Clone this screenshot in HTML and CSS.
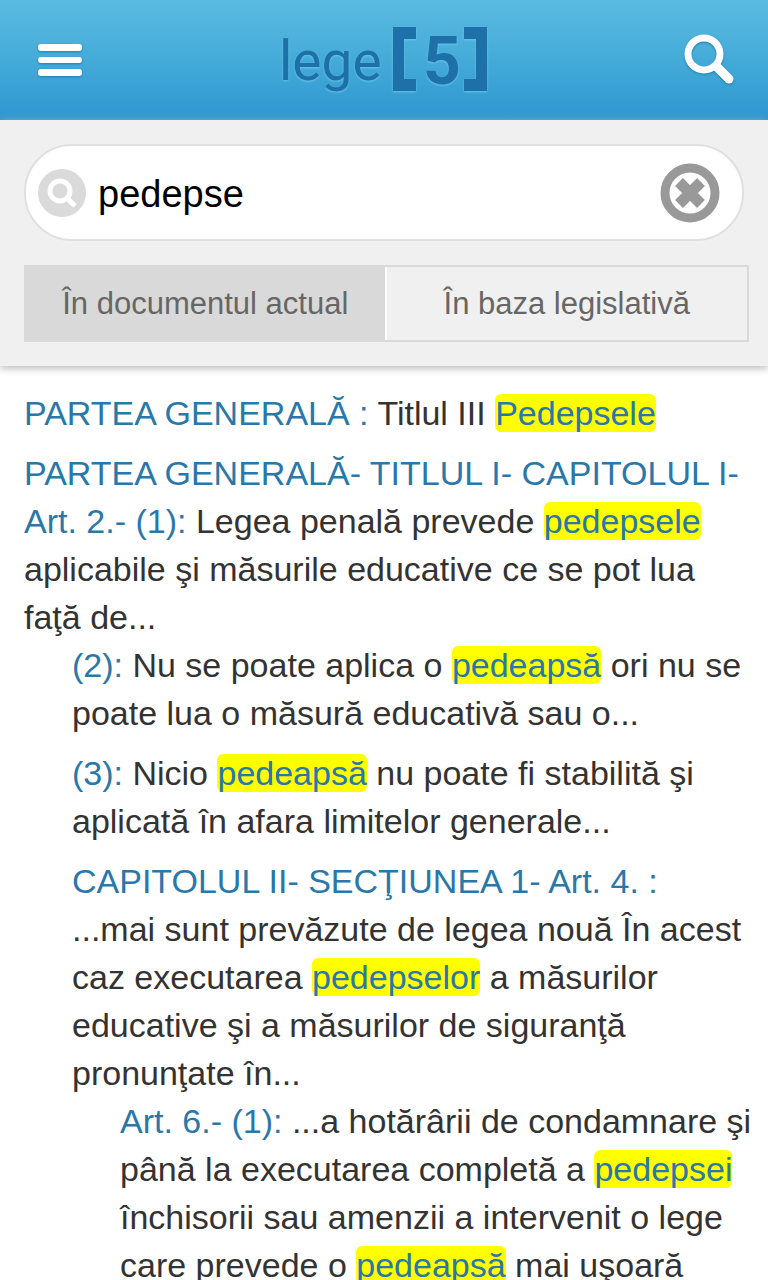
FILE: index.html
```html
<!DOCTYPE html>
<html lang="ro">
<head>
<meta charset="utf-8">
<meta name="viewport" content="width=device-width, initial-scale=1">
<title>lege[5]</title>
<link rel="stylesheet" href="styles.css">
</head>
<body>
<header class="topbar">
  <button class="icon-button" type="button" aria-label="Meniu">
    <svg class="menu-icon" viewBox="0 0 48 36" aria-hidden="true">
      <rect x="2" y="2" width="44" height="7" rx="3"/>
      <rect x="2" y="15" width="44" height="6" rx="3"/>
      <rect x="2" y="27" width="44" height="7" rx="3"/>
    </svg>
  </button>
  <svg class="logo" viewBox="0 0 208 80" role="img" aria-label="lege[5]">
    <text class="logo-word" x="0" y="60">lege</text>
    <path d="M114 7h23v12h-12v40h12v12h-23zM185 7h23v64h-23v-12h12v-40h-12z"/>
    <text class="logo-digit" x="144" y="64">5</text>
  </svg>
  <button class="icon-button" type="button" aria-label="Căutare">
    <svg class="search-icon" viewBox="0 0 54 54" aria-hidden="true">
      <circle cx="22" cy="21" r="16"/>
      <path class="search-handle" d="M35 34l12 12"/>
    </svg>
  </button>
</header>

<form class="search-panel">
  <div class="search-box">
    <svg class="search-badge" viewBox="0 0 48 48" aria-hidden="true">
      <circle class="badge-disc" cx="24" cy="24" r="24"/>
      <circle class="badge-line" cx="22" cy="22" r="10"/>
      <path class="badge-line" d="M29 29l8 8"/>
    </svg>
    <input class="search-input" type="text" value="pedepse" aria-label="Text căutat">
    <button class="clear-button" type="button" aria-label="Șterge">
      <svg class="clear-icon" viewBox="0 0 60 60" aria-hidden="true">
        <circle class="clear-ring" cx="30" cy="30" r="25"/>
        <path class="clear-cross" d="M19 19l22 22M41 19L19 41"/>
      </svg>
    </button>
  </div>
  <div class="scope">
    <button class="scope-button scope-active" type="button">În documentul actual</button>
    <button class="scope-button" type="button">În baza legislativă</button>
  </div>
</form>

<main class="results">
  <ul class="result-list">
    <li><p><a href="#">PARTEA GENERALĂ :</a> Titlul III <mark>Pedepsele</mark></p></li>
    <li>
      <p><a href="#">PARTEA GENERALĂ- TITLUL I- CAPITOLUL I- Art. 2.- (1):</a> Legea penală prevede <mark>pedepsele</mark> aplicabile şi măsurile educative ce se pot lua faţă de...</p>
      <ul class="result-list nested">
        <li><p><a href="#">(2):</a> Nu se poate aplica o <mark>pedeapsă</mark> ori nu se poate lua o măsură educativă sau o...</p></li>
        <li><p><a href="#">(3):</a> Nicio <mark>pedeapsă</mark> nu poate fi stabilită şi aplicată în afara limitelor generale...</p></li>
        <li>
          <p><a class="chapter" href="#">CAPITOLUL II- SECŢIUNEA 1- Art. 4. :</a> ...mai sunt prevăzute de legea nouă În acest caz executarea <mark>pedepselor</mark> a măsurilor educative şi a măsurilor de siguranţă pronunţate în...</p>
          <ul class="result-list nested">
            <li><p><a href="#">Art. 6.- (1):</a> ...a hotărârii de condamnare şi până la executarea completă a <mark>pedepsei</mark> închisorii sau amenzii a intervenit o lege care prevede o <mark>pedeapsă</mark> mai uşoară</p></li>
          </ul>
        </li>
      </ul>
    </li>
  </ul>
</main>
</body>
</html>
```
FILE: styles.css
```css
* {
  box-sizing: border-box;
}

body {
  margin: 0;
  background: #fff;
  color: #333;
  font-family: "Liberation Sans", Arial, sans-serif;
}

button {
  border: 0;
  background: none;
  padding: 0;
  font: inherit;
  color: inherit;
  cursor: pointer;
}

svg {
  display: block;
}

/* Top bar */
.topbar {
  display: flex;
  align-items: center;
  justify-content: space-between;
  height: 120px;
  padding: 0 32px 0 36px;
  background: linear-gradient(#5bbae0, #46add9 45%, #2e96d0);
}

.menu-icon {
  width: 48px;
  height: 36px;
  fill: #fff;
  filter: drop-shadow(0 1px 1px #1f7db0);
}

.search-icon {
  width: 54px;
  height: 54px;
  fill: none;
  stroke: #fff;
  stroke-width: 7;
  stroke-linecap: round;
  filter: drop-shadow(0 1px 1px #1f7db0);
}

.search-handle {
  stroke-width: 9;
}

.logo {
  width: 208px;
  height: 80px;
  fill: #1d70a8;
  overflow: visible;
  filter: drop-shadow(0 1px 1px #6cc4ea);
}

.logo-word {
  font: 400 55px Roboto, sans-serif;
}

.logo-digit {
  font: 700 66px Roboto, sans-serif;
}

/* Search panel */
.search-panel {
  position: relative;
  display: grid;
  gap: 24px;
  padding: 24px 19px 24px 24px;
  background: #f0f0f0;
  box-shadow: 0 2px 8px #b8b4b4;
}

.search-box {
  display: flex;
  align-items: center;
  gap: 12px;
  height: 97px;
  margin-right: 5px;
  padding: 0 22px 0 12px;
  border: 2px solid #e0e0e0;
  border-radius: 48px;
  background: #fff;
}

.search-badge {
  flex: none;
  width: 48px;
  height: 48px;
}

.badge-disc {
  fill: #dadada;
}

.badge-line {
  fill: none;
  stroke: #fff;
  stroke-width: 5;
}

.search-input {
  flex: 1;
  min-width: 0;
  padding: 4px 0 0;
  border: 0;
  outline: 0;
  background: none;
  color: #000;
  font: 38px "Liberation Sans", Arial, sans-serif;
}

.clear-icon {
  width: 60px;
  height: 60px;
  fill: none;
  stroke: #999;
}

.clear-ring {
  stroke-width: 9;
}

.clear-cross {
  stroke-width: 11;
}

.scope {
  display: grid;
  grid-template-columns: 1fr 1fr;
  border: 2px solid #d9d9d9;
}

.scope-button {
  height: 73px;
  color: #666;
  font-size: 31px;
}

.scope-active {
  background: #d9d9d9;
  border-right: 2px solid #fff;
}

/* Results */
.results {
  padding: 23px 16px 23px 24px;
  font-size: 34px;
  line-height: 48px;
}

.results p {
  margin: 0;
}

.result-list {
  margin: 0;
  padding: 0;
  list-style: none;
}

.result-list > li + li {
  margin-top: 12px;
}

.nested {
  padding-left: 48px;
}

.results a {
  color: #2a77a9;
  text-decoration: none;
}

.results .chapter {
  display: block;
}

mark {
  border-radius: 6px;
  background: #ff0;
  color: #2a77a9;
}
```
